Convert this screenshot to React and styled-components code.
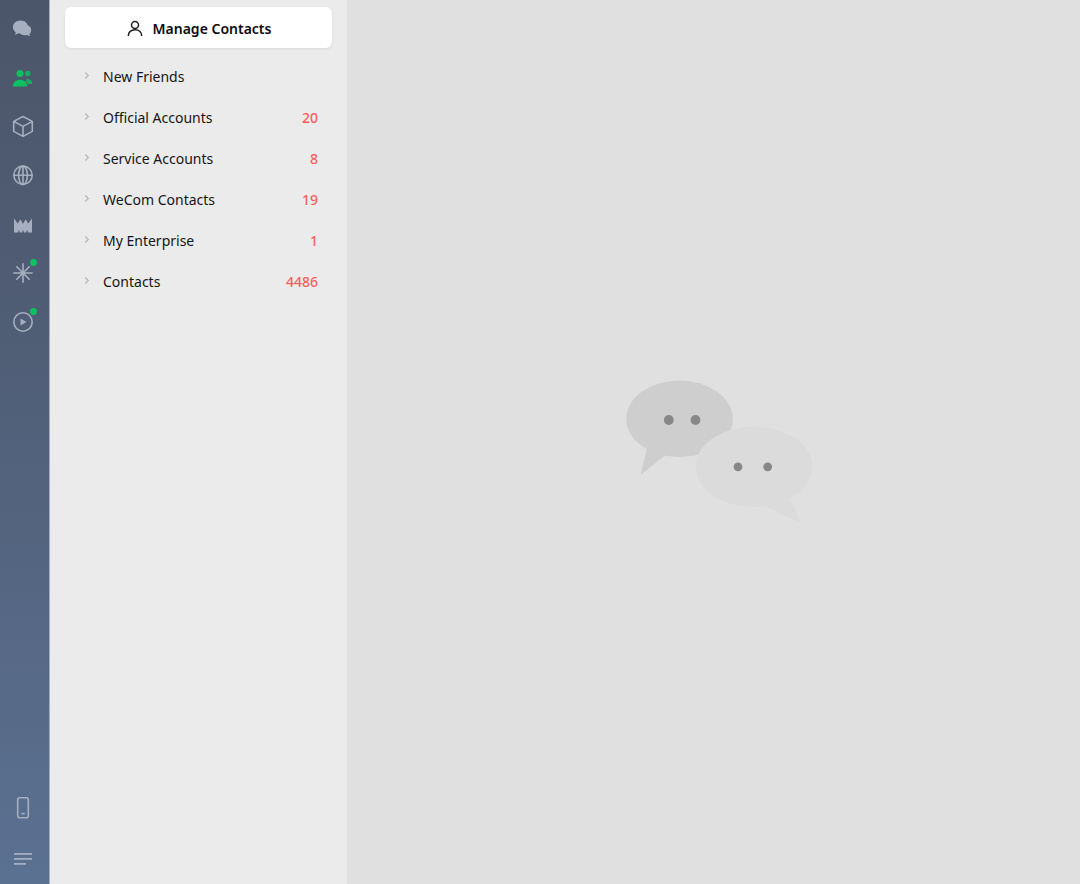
import React from 'react';
import styled, { createGlobalStyle } from 'styled-components';

const GlobalStyle = createGlobalStyle`
  *, *::before, *::after { box-sizing: border-box; }
  body {
    margin: 0;
    font-family: "Noto Sans", "Open Sans", sans-serif;
    font-size: 14px;
    color: #161616;
  }
  button {
    margin: 0;
    padding: 0;
    border: 0;
    background: none;
    font: inherit;
    color: inherit;
    cursor: pointer;
  }
`;

const Shell = styled.div`
  display: grid;
  grid-template-columns: 50px 297px minmax(0, 1fr);
  min-height: 100vh;
`;

const Rail = styled.nav`
  display: flex;
  flex-direction: column;
  justify-content: space-between;
  padding: 4px 3px 0 0;
  border-right: 1px solid #a3adbb;
  background: linear-gradient(#4c566a, #505e76 40%, #5b7192);
`;

const RailGroup = styled.div`
  display: flex;
  flex-direction: column;
`;

const RailButton = styled.button`
  position: relative;
  display: flex;
  align-items: center;
  justify-content: center;
  height: ${({ $tall }) => ($tall ? '51px' : '49px')};
  padding-bottom: 1px;
  color: ${({ $active }) => ($active ? '#0dc160' : '#a6afbf')};
`;

const UnreadDot = styled.span`
  position: absolute;
  top: 10px;
  right: 9px;
  width: 7px;
  height: 7px;
  border-radius: 50%;
  background: #0dc160;
`;

const Sidebar = styled.aside`
  display: flex;
  flex-direction: column;
  gap: 8px;
  padding: 7px 15px;
  background: #ebebeb;
`;

const ManageButton = styled.button`
  display: flex;
  align-items: center;
  justify-content: center;
  gap: 10px;
  height: 41px;
  padding: 2px 0 0 1px;
  border-radius: 6px;
  background: #fff;
  box-shadow: 0 1px 3px rgba(0, 0, 0, 0.08);
  color: #0c0c0c;
  font-weight: 600;
`;

const GroupList = styled.ul`
  margin: 0;
  padding: 0;
  list-style: none;
`;

const GroupButton = styled.button`
  display: flex;
  align-items: center;
  width: 100%;
  height: 41px;
  padding: 0 14px 1px 16px;
  text-align: left;
`;

const GroupName = styled.span`
  flex: 1;
  padding-left: 10px;
`;

const Count = styled.span`
  color: #fa5d5d;
  font-weight: 500;
`;

const Detail = styled.main`
  display: flex;
  align-items: center;
  justify-content: center;
  padding: 20px 0 0 12px;
  background: #e0e0e0;
`;

const Icon = ({ children }) => (
  <svg width="24" height="24" viewBox="0 0 24 24" fill="none" stroke="currentColor"
    strokeWidth="1.6" strokeLinejoin="round" aria-hidden="true">
    {children}
  </svg>
);

const ChatsIcon = () => (
  <Icon>
    <g fill="currentColor" stroke="none">
      <path d="M9.600 4.500c-4.500 0-7.700 2.900-7.700 6.600 0 2.200 1.100 4 2.800 5.200l-.5 2.600 3.100-1.600c4.500.9 9.700-1.400 9.700-6.200 0-3.700-3-6.600-7.400-6.600z" />
      <path d="M15 9.300c3.400-.2 5.200 2.400 5.200 4.900 0 1.500-.6 2.800-1.700 3.700l.4 2.300-2.800-1.200c-4 .9-7.200-.6-7.900-3.500z" />
    </g>
  </Icon>
);

const ContactsIcon = () => (
  <Icon>
    <g fill="currentColor" stroke="none">
      <circle cx="9" cy="8.500" r="3.500" />
      <path d="M2 21.500v-1c0-3.400 3.200-5.700 7-5.700s7 2.300 7 5.700v1z" />
      <g opacity="0.8">
        <circle cx="16.800" cy="8.500" r="2.700" />
        <path d="M14.400 14.700c3.300-1.900 6.800.3 6.800 3.600v.8h-4.700c-.4-1.600-1.100-2.900-2.100-4.400z" />
      </g>
    </g>
  </Icon>
);

const CubeIcon = () => (
  <Icon><path d="M12 2.500 21.300 7.400v10L12 22.400 2.700 17.400v-10zM2.700 7.400l9.300 5 9.300-5M12 12.400v10" /></Icon>
);

const GlobeIcon = () => (
  <Icon>
    <circle cx="12" cy="12.300" r="9.200" />
    <ellipse cx="12" cy="12.300" rx="4.400" ry="9.200" />
    <path d="M2.700 12.300h18.600M12 3v18.600" />
  </Icon>
);

const CrownIcon = () => (
  <Icon>
    <path fill="currentColor" stroke="none"
      d="M3 6.500 6.800 11.500 9.300 7.300 12 11.800l2.700-4.500 2.500 4.200L21 6.500v13.900h-4l-.9-2.600-.9 2.600h-2.300l-.9-2.600-.9 2.600H8.800l-.9-2.600-.9 2.600H3z" />
  </Icon>
);

const SparkIcon = () => (
  <Icon>
    <path d="M12 2.300v19.400M2.300 12h19.400M5.300 5.300l13.400 13.400M18.700 5.300 5.300 18.700" />
    <circle cx="12" cy="12" r="2" fill="currentColor" stroke="none" />
  </Icon>
);

const PlayIcon = () => (
  <Icon>
    <circle cx="12" cy="12" r="9.200" />
    <path d="M9.500 8.500v7l6-3.500z" fill="currentColor" stroke="none" />
  </Icon>
);

const PhoneIcon = () => (
  <Icon>
    <rect x="6.700" y="2.700" width="10.600" height="20" rx="2" />
    <path d="M10.300 18.600h3.400" />
  </Icon>
);

const MenuIcon = () => (
  <Icon><path strokeWidth="1.800" d="M3 7.900h18M3 12.900h18M3 17.900h12" /></Icon>
);

const PersonIcon = () => (
  <svg width="16" height="18" viewBox="0 0 16 18" fill="none" stroke="#222" strokeWidth="1.500" aria-hidden="true">
    <circle cx="8" cy="5" r="3.500" />
    <path d="M1.300 16c0-3.800 2.900-6.300 6.700-6.300s6.700 2.500 6.700 6.300" />
  </svg>
);

const Chevron = () => (
  <svg width="12" height="12" viewBox="0 0 12 12" fill="none" stroke="#b3b7bc" strokeWidth="1.200" aria-hidden="true">
    <path d="m4.300 2.500 3 3-3 3" />
  </svg>
);

const Bubbles = () => (
  <svg width="188" height="144" viewBox="0 0 188 144" aria-hidden="true">
    <g fill="#cecece">
      <ellipse cx="53.500" cy="38.800" rx="53.300" ry="38.300" />
      <path d="M21.500 66 14.500 95l24.500-19.500z" />
    </g>
    <g fill="#dbdbdb">
      <ellipse cx="128" cy="86.800" rx="58.500" ry="40.200" />
      <path d="m163 117 12.500 26.500L136 125z" />
    </g>
    <g fill="#888">
      <circle cx="42.800" cy="40" r="4.900" />
      <circle cx="69.500" cy="40" r="4.900" />
      <circle cx="112" cy="86.800" r="4.400" />
      <circle cx="141.700" cy="86.800" r="4.400" />
    </g>
  </svg>
);

const primaryTools = [
  { label: 'Chats', Glyph: ChatsIcon },
  { label: 'Contacts', Glyph: ContactsIcon, active: true },
  { label: 'Favorites', Glyph: CubeIcon },
  { label: 'Browser', Glyph: GlobeIcon },
  { label: 'Channels', Glyph: CrownIcon },
  { label: 'Discover', Glyph: SparkIcon, unread: true },
  { label: 'Videos', Glyph: PlayIcon, unread: true },
];

const secondaryTools = [
  { label: 'Phone', Glyph: PhoneIcon },
  { label: 'Menu', Glyph: MenuIcon },
];

const groups = [
  { name: 'New Friends' },
  { name: 'Official Accounts', count: 20 },
  { name: 'Service Accounts', count: 8 },
  { name: 'WeCom Contacts', count: 19 },
  { name: 'My Enterprise', count: 1 },
  { name: 'Contacts', count: 4486 },
];

export default function App() {
  return (
    <>
      <GlobalStyle />
      <Shell>
        <Rail>
          <RailGroup>
            {primaryTools.map(({ label, Glyph, active, unread }) => (
              <RailButton key={label} type="button" aria-label={label} $active={active}>
                <Glyph />
                {unread && <UnreadDot />}
              </RailButton>
            ))}
          </RailGroup>
          <RailGroup>
            {secondaryTools.map(({ label, Glyph }) => (
              <RailButton key={label} type="button" aria-label={label} $tall>
                <Glyph />
              </RailButton>
            ))}
          </RailGroup>
        </Rail>
        <Sidebar>
          <ManageButton type="button">
            <PersonIcon />
            Manage Contacts
          </ManageButton>
          <GroupList>
            {groups.map(({ name, count }) => (
              <li key={name}>
                <GroupButton type="button" aria-expanded="false">
                  <Chevron />
                  <GroupName>{name}</GroupName>
                  {count && <Count>{count}</Count>}
                </GroupButton>
              </li>
            ))}
          </GroupList>
        </Sidebar>
        <Detail>
          <Bubbles />
        </Detail>
      </Shell>
    </>
  );
}
